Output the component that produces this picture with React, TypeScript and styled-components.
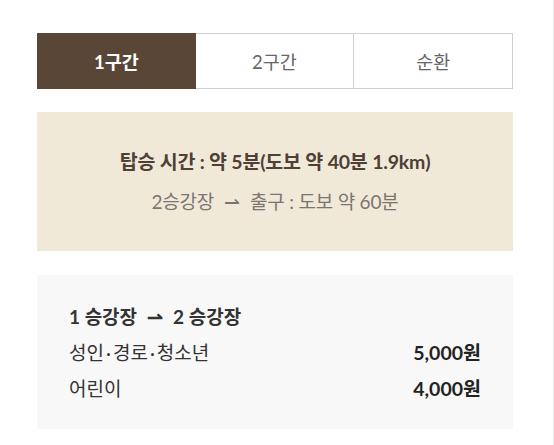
import React, { useState } from "react";
import styled, { createGlobalStyle } from "styled-components";

const GlobalStyle = createGlobalStyle`
  html, body {
    margin: 0;
    padding: 0;
    background: #fff;
  }
  body {
    font-family: "Lato", "Noto Sans CJK KR", sans-serif;
    border-right: 1px solid #ececec;
    min-height: 445px;
    box-sizing: border-box;
  }
`;

const Page = styled.div`
  padding: 33px 40px 0 37px;
  display: flex;
  flex-direction: column;
`;

const Tabs = styled.div`
  display: grid;
  grid-template-columns: repeat(3, 1fr);
  height: 56px;
`;

const Tab = styled.button<{ $active?: boolean }>`
  font-family: inherit;
  font-size: 18.5px;
  font-weight: ${(p) => (p.$active ? 700 : 400)};
  color: ${(p) => (p.$active ? "#fff" : "#666")};
  background: ${(p) => (p.$active ? "#5a4637" : "#fff")};
  border: 1px solid ${(p) => (p.$active ? "#5a4637" : "#cfcfcf")};
  border-left-width: 0;
  padding: 0;
  cursor: pointer;
  &:first-child {
    border-left-width: 1px;
  }
`;

const Notice = styled.div`
  margin-top: 23px;
  height: 139px;
  box-sizing: border-box;
  padding-bottom: 4px;
  background: #f1e9d8;
  display: flex;
  flex-direction: column;
  align-items: center;
  justify-content: center;
  gap: 12px;
`;

const NoticeTitle = styled.div`
  font-size: 19.5px;
  font-weight: 700;
  color: #4e4036;
  letter-spacing: -0.2px;
`;

const NoticeSub = styled.div`
  font-size: 19px;
  color: #7a7571;
  letter-spacing: -0.2px;
`;

const Arrow = styled.span`
  margin: 0 10px;
`;

const Fare = styled.div`
  margin-top: 24px;
  height: 154px;
  background: #f8f8f8;
  padding: 27px 32px 0 32px;
  box-sizing: border-box;
  display: flex;
  flex-direction: column;
  gap: 7px;
`;

const FareTitle = styled.div`
  font-size: 19px;
  font-weight: 700;
  color: #333;
  margin-bottom: 1px;
`;

const FareRow = styled.div`
  display: flex;
  justify-content: space-between;
  align-items: center;
  font-size: 19px;
  color: #333;
`;

const Dot = styled.span`
  margin: 0 2px;
`;

const Price = styled.span`
  font-weight: 700;
  font-size: 19.5px;
  color: #222;
`;

const tabs = ["1구간", "2구간", "순환"];

export default function App() {
  const [active, setActive] = useState(0);
  return (
    <>
      <GlobalStyle />
      <Page>
        <Tabs>
          {tabs.map((t, i) => (
            <Tab key={t} $active={active === i} onClick={() => setActive(i)}>
              {t}
            </Tab>
          ))}
        </Tabs>
        <Notice>
          <NoticeTitle>탑승 시간 : 약 5분(도보 약 40분 1.9km)</NoticeTitle>
          <NoticeSub>
            2승강장<Arrow>⇀</Arrow>출구 : 도보 약 60분
          </NoticeSub>
        </Notice>
        <Fare>
          <FareTitle>
            1 승강장<Arrow>⇀</Arrow>2 승강장
          </FareTitle>
          <FareRow>
            <span>
              성인<Dot>·</Dot>경로<Dot>·</Dot>청소년
            </span>
            <Price>5,000원</Price>
          </FareRow>
          <FareRow>
            <span>어린이</span>
            <Price>4,000원</Price>
          </FareRow>
        </Fare>
      </Page>
    </>
  );
}
